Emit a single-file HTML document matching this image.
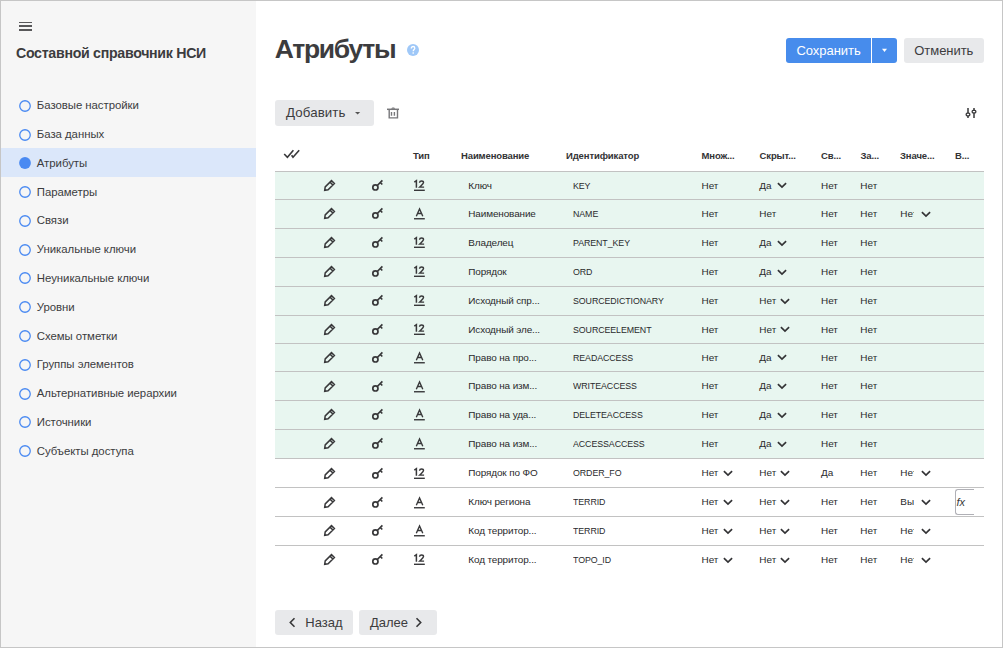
<!DOCTYPE html>
<html><head><meta charset="utf-8"><style>
*{box-sizing:border-box;margin:0;padding:0}
html,body{width:1003px;height:648px;overflow:hidden;background:#fff;font-family:"Liberation Sans", sans-serif;color:#3d3d3f}
.t{position:absolute;white-space:nowrap}
.frame{position:absolute;left:0;top:0;width:1003px;height:648px;border:1px solid #c6c6c6;z-index:50;pointer-events:none}
.side{position:absolute;left:0;top:0;width:256px;height:648px;background:#f6f6f6}
.burger{position:absolute;left:19px;width:13px;height:1.9px;background:#58585a}
.msel{position:absolute;left:1px;width:255px;background:#dbe7fa}
.mdot{position:absolute;left:18.6px;width:11.8px;height:11.8px;border-radius:50%;border:1.6px solid #4a8af2}
.mdot.sel{background:#4b8cf0}
.help{position:absolute;left:407px;top:43.8px;width:12px;height:12px;border-radius:50%;background:#9fc8f8;color:#fff;font-size:9px;font-weight:bold;text-align:center;line-height:12px}
.btn{position:absolute;border-radius:3px}
.blue{background:#478cec}
.gray{background:#e8e9eb}
.row{position:absolute;left:275px;width:709px}
.hl{position:absolute;left:275px;width:709px;height:1px;background:#c2c2c2}
.ic{position:absolute}
.td{color:#2a2a2c}
.ul{position:absolute;height:1.5px;background:#38383a}
.clip{position:absolute;overflow:hidden}
.fx{position:absolute;left:954.5px;width:19.5px;border:1px solid #b0b0b6;border-right:none;border-radius:3px 0 0 3px;background:#fff}
</style></head><body>
<div class="side"></div>
<div class="burger" style="top:21.55px"></div>
<div class="burger" style="top:25.45px"></div>
<div class="burger" style="top:29.45px"></div>
<div class="t " style="left:16.00px;top:43.90px;font-size:14.2px;line-height:18px;font-weight:700;color:#3c3c3e;letter-spacing:-0.3px">Составной справочник НСИ</div>
<svg class="ic" style="left:18.5px;top:99.80px" width="12" height="12" viewBox="0 0 12 12"><circle cx="6" cy="6" r="5.25" fill="none" stroke="#4a8af2" stroke-width="1.3"/></svg>
<div class="t " style="left:36.80px;top:98.37px;font-size:11.4px;line-height:15px;color:#3c3c3e;letter-spacing:-0.04px">Базовые настройки</div>
<svg class="ic" style="left:18.5px;top:128.58px" width="12" height="12" viewBox="0 0 12 12"><circle cx="6" cy="6" r="5.25" fill="none" stroke="#4a8af2" stroke-width="1.3"/></svg>
<div class="t " style="left:36.80px;top:127.15px;font-size:11.4px;line-height:15px;color:#3c3c3e;letter-spacing:-0.04px">База данных</div>
<div class="msel" style="top:148px;height:29px"></div>
<svg class="ic" style="left:18.5px;top:157.36px" width="12" height="12" viewBox="0 0 12 12"><circle cx="6" cy="6" r="5.9" fill="#4a8af2"/></svg>
<div class="t " style="left:36.80px;top:155.93px;font-size:11.4px;line-height:15px;color:#3c3c3e;letter-spacing:-0.04px">Атрибуты</div>
<svg class="ic" style="left:18.5px;top:186.14px" width="12" height="12" viewBox="0 0 12 12"><circle cx="6" cy="6" r="5.25" fill="none" stroke="#4a8af2" stroke-width="1.3"/></svg>
<div class="t " style="left:36.80px;top:184.71px;font-size:11.4px;line-height:15px;color:#3c3c3e;letter-spacing:-0.04px">Параметры</div>
<svg class="ic" style="left:18.5px;top:214.92px" width="12" height="12" viewBox="0 0 12 12"><circle cx="6" cy="6" r="5.25" fill="none" stroke="#4a8af2" stroke-width="1.3"/></svg>
<div class="t " style="left:36.80px;top:213.49px;font-size:11.4px;line-height:15px;color:#3c3c3e;letter-spacing:-0.04px">Связи</div>
<svg class="ic" style="left:18.5px;top:243.70px" width="12" height="12" viewBox="0 0 12 12"><circle cx="6" cy="6" r="5.25" fill="none" stroke="#4a8af2" stroke-width="1.3"/></svg>
<div class="t " style="left:36.80px;top:242.27px;font-size:11.4px;line-height:15px;color:#3c3c3e;letter-spacing:-0.04px">Уникальные ключи</div>
<svg class="ic" style="left:18.5px;top:272.48px" width="12" height="12" viewBox="0 0 12 12"><circle cx="6" cy="6" r="5.25" fill="none" stroke="#4a8af2" stroke-width="1.3"/></svg>
<div class="t " style="left:36.80px;top:271.05px;font-size:11.4px;line-height:15px;color:#3c3c3e;letter-spacing:-0.04px">Неуникальные ключи</div>
<svg class="ic" style="left:18.5px;top:301.26px" width="12" height="12" viewBox="0 0 12 12"><circle cx="6" cy="6" r="5.25" fill="none" stroke="#4a8af2" stroke-width="1.3"/></svg>
<div class="t " style="left:36.80px;top:299.83px;font-size:11.4px;line-height:15px;color:#3c3c3e;letter-spacing:-0.04px">Уровни</div>
<svg class="ic" style="left:18.5px;top:330.04px" width="12" height="12" viewBox="0 0 12 12"><circle cx="6" cy="6" r="5.25" fill="none" stroke="#4a8af2" stroke-width="1.3"/></svg>
<div class="t " style="left:36.80px;top:328.61px;font-size:11.4px;line-height:15px;color:#3c3c3e;letter-spacing:-0.04px">Схемы отметки</div>
<svg class="ic" style="left:18.5px;top:358.82px" width="12" height="12" viewBox="0 0 12 12"><circle cx="6" cy="6" r="5.25" fill="none" stroke="#4a8af2" stroke-width="1.3"/></svg>
<div class="t " style="left:36.80px;top:357.39px;font-size:11.4px;line-height:15px;color:#3c3c3e;letter-spacing:-0.04px">Группы элементов</div>
<svg class="ic" style="left:18.5px;top:387.60px" width="12" height="12" viewBox="0 0 12 12"><circle cx="6" cy="6" r="5.25" fill="none" stroke="#4a8af2" stroke-width="1.3"/></svg>
<div class="t " style="left:36.80px;top:386.17px;font-size:11.4px;line-height:15px;color:#3c3c3e;letter-spacing:-0.04px">Альтернативные иерархии</div>
<svg class="ic" style="left:18.5px;top:416.38px" width="12" height="12" viewBox="0 0 12 12"><circle cx="6" cy="6" r="5.25" fill="none" stroke="#4a8af2" stroke-width="1.3"/></svg>
<div class="t " style="left:36.80px;top:414.95px;font-size:11.4px;line-height:15px;color:#3c3c3e;letter-spacing:-0.04px">Источники</div>
<svg class="ic" style="left:18.5px;top:445.16px" width="12" height="12" viewBox="0 0 12 12"><circle cx="6" cy="6" r="5.25" fill="none" stroke="#4a8af2" stroke-width="1.3"/></svg>
<div class="t " style="left:36.80px;top:443.73px;font-size:11.4px;line-height:15px;color:#3c3c3e;letter-spacing:-0.04px">Субъекты доступа</div>
<div class="t " style="left:274.80px;top:32.46px;font-size:26.5px;line-height:34px;font-weight:700;color:#3c3c3e;letter-spacing:-1.3px">Атрибуты</div>
<svg class="ic" style="left:407px;top:43.9px" width="12" height="12" viewBox="0 0 12 12"><circle cx="6" cy="6" r="6" fill="#9fc8f8"/><path d="M4.3 4.5 C4.3 3.2 5.1 2.5 6.1 2.5 C7.1 2.5 7.8 3.2 7.8 4.2 C7.8 5.4 6.3 5.7 6.2 7.3" fill="none" stroke="#fff" stroke-width="1.3"/><rect x="5.5" y="8.3" width="1.4" height="1.4" fill="#fff"/></svg>
<div class="btn blue" style="left:786px;top:38px;width:111px;height:25px"></div>
<div class="t " style="left:796.50px;top:42.22px;font-size:13px;line-height:17px;color:#fff;letter-spacing:-0.05px">Сохранить</div>
<div style="position:absolute;left:871px;top:38px;width:1px;height:25px;background:#fff"></div>
<svg class="ic" style="left:881.3px;top:48.3px" width="8" height="6" viewBox="0 0 8 6"><path d="M1 0.7 L6 0.7 L3.5 4 Z" fill="#fff"/></svg>
<div class="btn gray" style="left:904px;top:38px;width:80px;height:25px"></div>
<div class="t " style="left:914.30px;top:42.22px;font-size:13px;line-height:17px;color:#3c3c3e;letter-spacing:-0.05px">Отменить</div>
<div class="btn gray" style="left:275px;top:100px;width:99px;height:26px"></div>
<div class="t " style="left:286.00px;top:103.71px;font-size:13.3px;line-height:17px;color:#3c3c3e;letter-spacing:0.1px">Добавить</div>
<svg class="ic" style="left:354px;top:110.8px" width="8" height="5" viewBox="0 0 8 5"><path d="M1 1 L6.2 1 L3.6 3.6 Z" fill="#555"/></svg>
<svg class="ic" style="left:381px;top:100px" width="25" height="25" viewBox="0 0 25 25"><path d="M6 9.3 H18" stroke="#77777a" stroke-width="1.5" fill="none"/><path d="M10.2 8.8 C10.6 7 13.8 7 14.2 8.8 Z" fill="#77777a"/><path d="M8.2 9.6 V17.9 H16.5 V9.6 M10.5 12.1 V15.7 M13.4 12.1 V15.7" fill="none" stroke="#77777a" stroke-width="1.4"/></svg>
<svg class="ic" style="left:963px;top:106px" width="14" height="14" viewBox="0 0 14 14"><path d="M5 2 V12 M11 2 V12" fill="none" stroke="#38383a" stroke-width="1.5"/><rect x="3.2" y="7.2" width="3.6" height="2.6" rx="1" fill="#fff" stroke="#38383a" stroke-width="1.3"/><rect x="9.2" y="4.3" width="3.6" height="2.6" rx="1" fill="#fff" stroke="#38383a" stroke-width="1.3"/></svg>
<div class="t " style="left:413.00px;top:149.62px;font-size:9.5px;line-height:12px;font-weight:700;color:#333335;letter-spacing:-0.12px">Тип</div>
<div class="t " style="left:461.00px;top:149.62px;font-size:9.5px;line-height:12px;font-weight:700;color:#333335;letter-spacing:-0.12px">Наименование</div>
<div class="t " style="left:566.00px;top:149.62px;font-size:9.5px;line-height:12px;font-weight:700;color:#333335;letter-spacing:-0.12px">Идентификатор</div>
<div class="t " style="left:701.50px;top:149.62px;font-size:9.5px;line-height:12px;font-weight:700;color:#333335;letter-spacing:-0.12px">Множ...</div>
<div class="t " style="left:759.50px;top:149.62px;font-size:9.5px;line-height:12px;font-weight:700;color:#333335;letter-spacing:-0.12px">Скрыт...</div>
<div class="t " style="left:821.00px;top:149.62px;font-size:9.5px;line-height:12px;font-weight:700;color:#333335;letter-spacing:-0.12px">Св...</div>
<div class="t " style="left:860.50px;top:149.62px;font-size:9.5px;line-height:12px;font-weight:700;color:#333335;letter-spacing:-0.12px">За...</div>
<div class="t " style="left:900.00px;top:149.62px;font-size:9.5px;line-height:12px;font-weight:700;color:#333335;letter-spacing:-0.12px">Значе...</div>
<div class="t " style="left:955.00px;top:149.62px;font-size:9.5px;line-height:12px;font-weight:700;color:#333335;letter-spacing:-0.12px">В...</div>
<svg class="ic" style="left:282px;top:147px" width="20" height="13" viewBox="0 0 20 13"><path d="M2.2 7 L5.4 10.3 L11.4 3.3 M9.6 8.3 L11 10.3 L17.2 3.3" fill="none" stroke="#38383a" stroke-width="1.6"/></svg>
<div class="hl" style="top:171px"></div>
<div class="row" style="top:172px;height:27px;background:#e8f6f0"></div>
<div class="hl" style="top:199px"></div>
<div class="ic" style="left:318px;top:175.00px"><svg width="20" height="20" viewBox="0 0 20 20"><path d="M6.7 15.3 L7.2 11.9 L13.5 5.6 L16.4 8.5 L10.1 14.8 Z M12 7.1 L14.9 10" fill="none" stroke="#38383a" stroke-width="1.5" stroke-linejoin="miter"/></svg></div>
<div class="ic" style="left:365px;top:175.00px"><svg width="20" height="20" viewBox="0 0 20 20"><circle cx="10.4" cy="12.4" r="2.6" fill="none" stroke="#38383a" stroke-width="1.7"/><path d="M12.3 10.5 L17.4 5.4 M15.3 7.5 L17.3 9.5" fill="none" stroke="#38383a" stroke-width="1.7"/></svg></div>
<svg class="ic" style="left:408px;top:176.00px" width="20" height="18" viewBox="0 0 20 18"><path d="M6.3 6.1 L8.4 4.6 V11.8" fill="none" stroke="#38383a" stroke-width="1.5"/><path d="M11.5 6.7 C11.6 5.3 12.5 4.9 13.6 4.9 C14.8 4.9 15.5 5.6 15.5 6.6 C15.5 7.6 14.9 8.2 11.8 11.1 H16.1" fill="none" stroke="#38383a" stroke-width="1.45"/><rect x="6" y="13.6" width="10.8" height="1.4" fill="#38383a"/></svg>
<div class="t td" style="left:468.30px;top:178.82px;font-size:9.95px;line-height:13px;letter-spacing:-0.12px">Ключ</div>
<div class="t td" style="left:573.30px;top:178.82px;font-size:9.95px;line-height:13px;letter-spacing:-0.1px;transform:scaleX(0.89);transform-origin:0 0">KEY</div>
<div class="t td" style="left:701.50px;top:178.82px;font-size:9.95px;line-height:13px">Нет</div>
<div class="t td" style="left:759.30px;top:178.82px;font-size:9.95px;line-height:13px">Да</div>
<svg class="ic" style="left:776.70px;top:182.45px" width="10" height="7" viewBox="0 0 10 7"><path d="M0.9 1.1 L5 5.1 L9.1 1.1" fill="none" stroke="#333335" stroke-width="1.65"/></svg>
<div class="t td" style="left:821.00px;top:178.82px;font-size:9.95px;line-height:13px">Нет</div>
<div class="t td" style="left:860.30px;top:178.82px;font-size:9.95px;line-height:13px">Нет</div>
<div class="row" style="top:200px;height:28px;background:#e8f6f0"></div>
<div class="hl" style="top:228px"></div>
<div class="ic" style="left:318px;top:203.45px"><svg width="20" height="20" viewBox="0 0 20 20"><path d="M6.7 15.3 L7.2 11.9 L13.5 5.6 L16.4 8.5 L10.1 14.8 Z M12 7.1 L14.9 10" fill="none" stroke="#38383a" stroke-width="1.5" stroke-linejoin="miter"/></svg></div>
<div class="ic" style="left:365px;top:203.45px"><svg width="20" height="20" viewBox="0 0 20 20"><circle cx="10.4" cy="12.4" r="2.6" fill="none" stroke="#38383a" stroke-width="1.7"/><path d="M12.3 10.5 L17.4 5.4 M15.3 7.5 L17.3 9.5" fill="none" stroke="#38383a" stroke-width="1.7"/></svg></div>
<svg class="ic" style="left:408px;top:204.45px" width="20" height="18" viewBox="0 0 20 18"><path d="M8.3 12.3 L11.55 5 L14.8 12.3 M9.4 9.5 H13.7" fill="none" stroke="#38383a" stroke-width="1.4"/><rect x="6" y="14.05" width="10.8" height="1.4" fill="#38383a"/></svg>
<div class="t td" style="left:468.30px;top:207.27px;font-size:9.95px;line-height:13px;letter-spacing:-0.12px">Наименование</div>
<div class="t td" style="left:573.30px;top:207.27px;font-size:9.95px;line-height:13px;letter-spacing:-0.1px;transform:scaleX(0.89);transform-origin:0 0">NAME</div>
<div class="t td" style="left:701.50px;top:207.27px;font-size:9.95px;line-height:13px">Нет</div>
<div class="t td" style="left:759.30px;top:207.27px;font-size:9.95px;line-height:13px">Нет</div>
<div class="t td" style="left:821.00px;top:207.27px;font-size:9.95px;line-height:13px">Нет</div>
<div class="t td" style="left:860.30px;top:207.27px;font-size:9.95px;line-height:13px">Нет</div>
<div class="clip" style="left:900px;top:199.50px;height:28.80px;width:14.2px"><div class="t td" style="left:0.30px;top:7.77px;font-size:9.95px;line-height:13px">Нет</div></div>
<svg class="ic" style="left:920.60px;top:210.90px" width="10" height="7" viewBox="0 0 10 7"><path d="M0.9 1.1 L5 5.1 L9.1 1.1" fill="none" stroke="#333335" stroke-width="1.65"/></svg>
<div class="row" style="top:229px;height:28px;background:#e8f6f0"></div>
<div class="hl" style="top:257px"></div>
<div class="ic" style="left:318px;top:232.35px"><svg width="20" height="20" viewBox="0 0 20 20"><path d="M6.7 15.3 L7.2 11.9 L13.5 5.6 L16.4 8.5 L10.1 14.8 Z M12 7.1 L14.9 10" fill="none" stroke="#38383a" stroke-width="1.5" stroke-linejoin="miter"/></svg></div>
<div class="ic" style="left:365px;top:232.35px"><svg width="20" height="20" viewBox="0 0 20 20"><circle cx="10.4" cy="12.4" r="2.6" fill="none" stroke="#38383a" stroke-width="1.7"/><path d="M12.3 10.5 L17.4 5.4 M15.3 7.5 L17.3 9.5" fill="none" stroke="#38383a" stroke-width="1.7"/></svg></div>
<svg class="ic" style="left:408px;top:233.35px" width="20" height="18" viewBox="0 0 20 18"><path d="M6.3 6.1 L8.4 4.6 V11.8" fill="none" stroke="#38383a" stroke-width="1.5"/><path d="M11.5 6.7 C11.6 5.3 12.5 4.9 13.6 4.9 C14.8 4.9 15.5 5.6 15.5 6.6 C15.5 7.6 14.9 8.2 11.8 11.1 H16.1" fill="none" stroke="#38383a" stroke-width="1.45"/><rect x="6" y="13.6" width="10.8" height="1.4" fill="#38383a"/></svg>
<div class="t td" style="left:468.30px;top:236.17px;font-size:9.95px;line-height:13px;letter-spacing:-0.12px">Владелец</div>
<div class="t td" style="left:573.30px;top:236.17px;font-size:9.95px;line-height:13px;letter-spacing:-0.1px;transform:scaleX(0.89);transform-origin:0 0">PARENT_KEY</div>
<div class="t td" style="left:701.50px;top:236.17px;font-size:9.95px;line-height:13px">Нет</div>
<div class="t td" style="left:759.30px;top:236.17px;font-size:9.95px;line-height:13px">Да</div>
<svg class="ic" style="left:776.70px;top:239.80px" width="10" height="7" viewBox="0 0 10 7"><path d="M0.9 1.1 L5 5.1 L9.1 1.1" fill="none" stroke="#333335" stroke-width="1.65"/></svg>
<div class="t td" style="left:821.00px;top:236.17px;font-size:9.95px;line-height:13px">Нет</div>
<div class="t td" style="left:860.30px;top:236.17px;font-size:9.95px;line-height:13px">Нет</div>
<div class="row" style="top:258px;height:28px;background:#e8f6f0"></div>
<div class="hl" style="top:286px"></div>
<div class="ic" style="left:318px;top:261.40px"><svg width="20" height="20" viewBox="0 0 20 20"><path d="M6.7 15.3 L7.2 11.9 L13.5 5.6 L16.4 8.5 L10.1 14.8 Z M12 7.1 L14.9 10" fill="none" stroke="#38383a" stroke-width="1.5" stroke-linejoin="miter"/></svg></div>
<div class="ic" style="left:365px;top:261.40px"><svg width="20" height="20" viewBox="0 0 20 20"><circle cx="10.4" cy="12.4" r="2.6" fill="none" stroke="#38383a" stroke-width="1.7"/><path d="M12.3 10.5 L17.4 5.4 M15.3 7.5 L17.3 9.5" fill="none" stroke="#38383a" stroke-width="1.7"/></svg></div>
<svg class="ic" style="left:408px;top:262.40px" width="20" height="18" viewBox="0 0 20 18"><path d="M6.3 6.1 L8.4 4.6 V11.8" fill="none" stroke="#38383a" stroke-width="1.5"/><path d="M11.5 6.7 C11.6 5.3 12.5 4.9 13.6 4.9 C14.8 4.9 15.5 5.6 15.5 6.6 C15.5 7.6 14.9 8.2 11.8 11.1 H16.1" fill="none" stroke="#38383a" stroke-width="1.45"/><rect x="6" y="13.6" width="10.8" height="1.4" fill="#38383a"/></svg>
<div class="t td" style="left:468.30px;top:265.22px;font-size:9.95px;line-height:13px;letter-spacing:-0.12px">Порядок</div>
<div class="t td" style="left:573.30px;top:265.22px;font-size:9.95px;line-height:13px;letter-spacing:-0.1px;transform:scaleX(0.89);transform-origin:0 0">ORD</div>
<div class="t td" style="left:701.50px;top:265.22px;font-size:9.95px;line-height:13px">Нет</div>
<div class="t td" style="left:759.30px;top:265.22px;font-size:9.95px;line-height:13px">Да</div>
<svg class="ic" style="left:776.70px;top:268.85px" width="10" height="7" viewBox="0 0 10 7"><path d="M0.9 1.1 L5 5.1 L9.1 1.1" fill="none" stroke="#333335" stroke-width="1.65"/></svg>
<div class="t td" style="left:821.00px;top:265.22px;font-size:9.95px;line-height:13px">Нет</div>
<div class="t td" style="left:860.30px;top:265.22px;font-size:9.95px;line-height:13px">Нет</div>
<div class="row" style="top:287px;height:28px;background:#e8f6f0"></div>
<div class="hl" style="top:315px"></div>
<div class="ic" style="left:318px;top:290.40px"><svg width="20" height="20" viewBox="0 0 20 20"><path d="M6.7 15.3 L7.2 11.9 L13.5 5.6 L16.4 8.5 L10.1 14.8 Z M12 7.1 L14.9 10" fill="none" stroke="#38383a" stroke-width="1.5" stroke-linejoin="miter"/></svg></div>
<div class="ic" style="left:365px;top:290.40px"><svg width="20" height="20" viewBox="0 0 20 20"><circle cx="10.4" cy="12.4" r="2.6" fill="none" stroke="#38383a" stroke-width="1.7"/><path d="M12.3 10.5 L17.4 5.4 M15.3 7.5 L17.3 9.5" fill="none" stroke="#38383a" stroke-width="1.7"/></svg></div>
<svg class="ic" style="left:408px;top:291.40px" width="20" height="18" viewBox="0 0 20 18"><path d="M6.3 6.1 L8.4 4.6 V11.8" fill="none" stroke="#38383a" stroke-width="1.5"/><path d="M11.5 6.7 C11.6 5.3 12.5 4.9 13.6 4.9 C14.8 4.9 15.5 5.6 15.5 6.6 C15.5 7.6 14.9 8.2 11.8 11.1 H16.1" fill="none" stroke="#38383a" stroke-width="1.45"/><rect x="6" y="13.6" width="10.8" height="1.4" fill="#38383a"/></svg>
<div class="t td" style="left:468.30px;top:294.22px;font-size:9.95px;line-height:13px;letter-spacing:-0.12px">Исходный спр...</div>
<div class="t td" style="left:573.30px;top:294.22px;font-size:9.95px;line-height:13px;letter-spacing:-0.1px;transform:scaleX(0.89);transform-origin:0 0">SOURCEDICTIONARY</div>
<div class="t td" style="left:701.50px;top:294.22px;font-size:9.95px;line-height:13px">Нет</div>
<div class="t td" style="left:759.30px;top:294.22px;font-size:9.95px;line-height:13px">Нет</div>
<svg class="ic" style="left:780.20px;top:297.85px" width="10" height="7" viewBox="0 0 10 7"><path d="M0.9 1.1 L5 5.1 L9.1 1.1" fill="none" stroke="#333335" stroke-width="1.65"/></svg>
<div class="t td" style="left:821.00px;top:294.22px;font-size:9.95px;line-height:13px">Нет</div>
<div class="t td" style="left:860.30px;top:294.22px;font-size:9.95px;line-height:13px">Нет</div>
<div class="row" style="top:316px;height:27px;background:#e8f6f0"></div>
<div class="hl" style="top:343px"></div>
<div class="ic" style="left:318px;top:318.90px"><svg width="20" height="20" viewBox="0 0 20 20"><path d="M6.7 15.3 L7.2 11.9 L13.5 5.6 L16.4 8.5 L10.1 14.8 Z M12 7.1 L14.9 10" fill="none" stroke="#38383a" stroke-width="1.5" stroke-linejoin="miter"/></svg></div>
<div class="ic" style="left:365px;top:318.90px"><svg width="20" height="20" viewBox="0 0 20 20"><circle cx="10.4" cy="12.4" r="2.6" fill="none" stroke="#38383a" stroke-width="1.7"/><path d="M12.3 10.5 L17.4 5.4 M15.3 7.5 L17.3 9.5" fill="none" stroke="#38383a" stroke-width="1.7"/></svg></div>
<svg class="ic" style="left:408px;top:319.90px" width="20" height="18" viewBox="0 0 20 18"><path d="M6.3 6.1 L8.4 4.6 V11.8" fill="none" stroke="#38383a" stroke-width="1.5"/><path d="M11.5 6.7 C11.6 5.3 12.5 4.9 13.6 4.9 C14.8 4.9 15.5 5.6 15.5 6.6 C15.5 7.6 14.9 8.2 11.8 11.1 H16.1" fill="none" stroke="#38383a" stroke-width="1.45"/><rect x="6" y="13.6" width="10.8" height="1.4" fill="#38383a"/></svg>
<div class="t td" style="left:468.30px;top:322.72px;font-size:9.95px;line-height:13px;letter-spacing:-0.12px">Исходный эле...</div>
<div class="t td" style="left:573.30px;top:322.72px;font-size:9.95px;line-height:13px;letter-spacing:-0.1px;transform:scaleX(0.89);transform-origin:0 0">SOURCEELEMENT</div>
<div class="t td" style="left:701.50px;top:322.72px;font-size:9.95px;line-height:13px">Нет</div>
<div class="t td" style="left:759.30px;top:322.72px;font-size:9.95px;line-height:13px">Нет</div>
<svg class="ic" style="left:780.20px;top:326.35px" width="10" height="7" viewBox="0 0 10 7"><path d="M0.9 1.1 L5 5.1 L9.1 1.1" fill="none" stroke="#333335" stroke-width="1.65"/></svg>
<div class="t td" style="left:821.00px;top:322.72px;font-size:9.95px;line-height:13px">Нет</div>
<div class="t td" style="left:860.30px;top:322.72px;font-size:9.95px;line-height:13px">Нет</div>
<div class="row" style="top:344px;height:27px;background:#e8f6f0"></div>
<div class="hl" style="top:371px"></div>
<div class="ic" style="left:318px;top:347.00px"><svg width="20" height="20" viewBox="0 0 20 20"><path d="M6.7 15.3 L7.2 11.9 L13.5 5.6 L16.4 8.5 L10.1 14.8 Z M12 7.1 L14.9 10" fill="none" stroke="#38383a" stroke-width="1.5" stroke-linejoin="miter"/></svg></div>
<div class="ic" style="left:365px;top:347.00px"><svg width="20" height="20" viewBox="0 0 20 20"><circle cx="10.4" cy="12.4" r="2.6" fill="none" stroke="#38383a" stroke-width="1.7"/><path d="M12.3 10.5 L17.4 5.4 M15.3 7.5 L17.3 9.5" fill="none" stroke="#38383a" stroke-width="1.7"/></svg></div>
<svg class="ic" style="left:408px;top:348.00px" width="20" height="18" viewBox="0 0 20 18"><path d="M8.3 12.3 L11.55 5 L14.8 12.3 M9.4 9.5 H13.7" fill="none" stroke="#38383a" stroke-width="1.4"/><rect x="6" y="14.05" width="10.8" height="1.4" fill="#38383a"/></svg>
<div class="t td" style="left:468.30px;top:350.82px;font-size:9.95px;line-height:13px;letter-spacing:-0.12px">Право на про...</div>
<div class="t td" style="left:573.30px;top:350.82px;font-size:9.95px;line-height:13px;letter-spacing:-0.1px;transform:scaleX(0.89);transform-origin:0 0">READACCESS</div>
<div class="t td" style="left:701.50px;top:350.82px;font-size:9.95px;line-height:13px">Нет</div>
<div class="t td" style="left:759.30px;top:350.82px;font-size:9.95px;line-height:13px">Да</div>
<svg class="ic" style="left:776.70px;top:354.45px" width="10" height="7" viewBox="0 0 10 7"><path d="M0.9 1.1 L5 5.1 L9.1 1.1" fill="none" stroke="#333335" stroke-width="1.65"/></svg>
<div class="t td" style="left:821.00px;top:350.82px;font-size:9.95px;line-height:13px">Нет</div>
<div class="t td" style="left:860.30px;top:350.82px;font-size:9.95px;line-height:13px">Нет</div>
<div class="row" style="top:372px;height:28px;background:#e8f6f0"></div>
<div class="hl" style="top:400px"></div>
<div class="ic" style="left:318px;top:375.50px"><svg width="20" height="20" viewBox="0 0 20 20"><path d="M6.7 15.3 L7.2 11.9 L13.5 5.6 L16.4 8.5 L10.1 14.8 Z M12 7.1 L14.9 10" fill="none" stroke="#38383a" stroke-width="1.5" stroke-linejoin="miter"/></svg></div>
<div class="ic" style="left:365px;top:375.50px"><svg width="20" height="20" viewBox="0 0 20 20"><circle cx="10.4" cy="12.4" r="2.6" fill="none" stroke="#38383a" stroke-width="1.7"/><path d="M12.3 10.5 L17.4 5.4 M15.3 7.5 L17.3 9.5" fill="none" stroke="#38383a" stroke-width="1.7"/></svg></div>
<svg class="ic" style="left:408px;top:376.50px" width="20" height="18" viewBox="0 0 20 18"><path d="M8.3 12.3 L11.55 5 L14.8 12.3 M9.4 9.5 H13.7" fill="none" stroke="#38383a" stroke-width="1.4"/><rect x="6" y="14.05" width="10.8" height="1.4" fill="#38383a"/></svg>
<div class="t td" style="left:468.30px;top:379.32px;font-size:9.95px;line-height:13px;letter-spacing:-0.12px">Право на изм...</div>
<div class="t td" style="left:573.30px;top:379.32px;font-size:9.95px;line-height:13px;letter-spacing:-0.1px;transform:scaleX(0.89);transform-origin:0 0">WRITEACCESS</div>
<div class="t td" style="left:701.50px;top:379.32px;font-size:9.95px;line-height:13px">Нет</div>
<div class="t td" style="left:759.30px;top:379.32px;font-size:9.95px;line-height:13px">Да</div>
<svg class="ic" style="left:776.70px;top:382.95px" width="10" height="7" viewBox="0 0 10 7"><path d="M0.9 1.1 L5 5.1 L9.1 1.1" fill="none" stroke="#333335" stroke-width="1.65"/></svg>
<div class="t td" style="left:821.00px;top:379.32px;font-size:9.95px;line-height:13px">Нет</div>
<div class="t td" style="left:860.30px;top:379.32px;font-size:9.95px;line-height:13px">Нет</div>
<div class="row" style="top:401px;height:28px;background:#e8f6f0"></div>
<div class="hl" style="top:429px"></div>
<div class="ic" style="left:318px;top:404.40px"><svg width="20" height="20" viewBox="0 0 20 20"><path d="M6.7 15.3 L7.2 11.9 L13.5 5.6 L16.4 8.5 L10.1 14.8 Z M12 7.1 L14.9 10" fill="none" stroke="#38383a" stroke-width="1.5" stroke-linejoin="miter"/></svg></div>
<div class="ic" style="left:365px;top:404.40px"><svg width="20" height="20" viewBox="0 0 20 20"><circle cx="10.4" cy="12.4" r="2.6" fill="none" stroke="#38383a" stroke-width="1.7"/><path d="M12.3 10.5 L17.4 5.4 M15.3 7.5 L17.3 9.5" fill="none" stroke="#38383a" stroke-width="1.7"/></svg></div>
<svg class="ic" style="left:408px;top:405.40px" width="20" height="18" viewBox="0 0 20 18"><path d="M8.3 12.3 L11.55 5 L14.8 12.3 M9.4 9.5 H13.7" fill="none" stroke="#38383a" stroke-width="1.4"/><rect x="6" y="14.05" width="10.8" height="1.4" fill="#38383a"/></svg>
<div class="t td" style="left:468.30px;top:408.22px;font-size:9.95px;line-height:13px;letter-spacing:-0.12px">Право на уда...</div>
<div class="t td" style="left:573.30px;top:408.22px;font-size:9.95px;line-height:13px;letter-spacing:-0.1px;transform:scaleX(0.89);transform-origin:0 0">DELETEACCESS</div>
<div class="t td" style="left:701.50px;top:408.22px;font-size:9.95px;line-height:13px">Нет</div>
<div class="t td" style="left:759.30px;top:408.22px;font-size:9.95px;line-height:13px">Да</div>
<svg class="ic" style="left:776.70px;top:411.85px" width="10" height="7" viewBox="0 0 10 7"><path d="M0.9 1.1 L5 5.1 L9.1 1.1" fill="none" stroke="#333335" stroke-width="1.65"/></svg>
<div class="t td" style="left:821.00px;top:408.22px;font-size:9.95px;line-height:13px">Нет</div>
<div class="t td" style="left:860.30px;top:408.22px;font-size:9.95px;line-height:13px">Нет</div>
<div class="row" style="top:430px;height:28px;background:#e8f6f0"></div>
<div class="hl" style="top:458px"></div>
<div class="ic" style="left:318px;top:433.40px"><svg width="20" height="20" viewBox="0 0 20 20"><path d="M6.7 15.3 L7.2 11.9 L13.5 5.6 L16.4 8.5 L10.1 14.8 Z M12 7.1 L14.9 10" fill="none" stroke="#38383a" stroke-width="1.5" stroke-linejoin="miter"/></svg></div>
<div class="ic" style="left:365px;top:433.40px"><svg width="20" height="20" viewBox="0 0 20 20"><circle cx="10.4" cy="12.4" r="2.6" fill="none" stroke="#38383a" stroke-width="1.7"/><path d="M12.3 10.5 L17.4 5.4 M15.3 7.5 L17.3 9.5" fill="none" stroke="#38383a" stroke-width="1.7"/></svg></div>
<svg class="ic" style="left:408px;top:434.40px" width="20" height="18" viewBox="0 0 20 18"><path d="M8.3 12.3 L11.55 5 L14.8 12.3 M9.4 9.5 H13.7" fill="none" stroke="#38383a" stroke-width="1.4"/><rect x="6" y="14.05" width="10.8" height="1.4" fill="#38383a"/></svg>
<div class="t td" style="left:468.30px;top:437.22px;font-size:9.95px;line-height:13px;letter-spacing:-0.12px">Право на изм...</div>
<div class="t td" style="left:573.30px;top:437.22px;font-size:9.95px;line-height:13px;letter-spacing:-0.1px;transform:scaleX(0.89);transform-origin:0 0">ACCESSACCESS</div>
<div class="t td" style="left:701.50px;top:437.22px;font-size:9.95px;line-height:13px">Нет</div>
<div class="t td" style="left:759.30px;top:437.22px;font-size:9.95px;line-height:13px">Да</div>
<svg class="ic" style="left:776.70px;top:440.85px" width="10" height="7" viewBox="0 0 10 7"><path d="M0.9 1.1 L5 5.1 L9.1 1.1" fill="none" stroke="#333335" stroke-width="1.65"/></svg>
<div class="t td" style="left:821.00px;top:437.22px;font-size:9.95px;line-height:13px">Нет</div>
<div class="t td" style="left:860.30px;top:437.22px;font-size:9.95px;line-height:13px">Нет</div>
<div class="hl" style="top:487px"></div>
<div class="ic" style="left:318px;top:462.50px"><svg width="20" height="20" viewBox="0 0 20 20"><path d="M6.7 15.3 L7.2 11.9 L13.5 5.6 L16.4 8.5 L10.1 14.8 Z M12 7.1 L14.9 10" fill="none" stroke="#38383a" stroke-width="1.5" stroke-linejoin="miter"/></svg></div>
<div class="ic" style="left:365px;top:462.50px"><svg width="20" height="20" viewBox="0 0 20 20"><circle cx="10.4" cy="12.4" r="2.6" fill="none" stroke="#38383a" stroke-width="1.7"/><path d="M12.3 10.5 L17.4 5.4 M15.3 7.5 L17.3 9.5" fill="none" stroke="#38383a" stroke-width="1.7"/></svg></div>
<svg class="ic" style="left:408px;top:463.50px" width="20" height="18" viewBox="0 0 20 18"><path d="M6.3 6.1 L8.4 4.6 V11.8" fill="none" stroke="#38383a" stroke-width="1.5"/><path d="M11.5 6.7 C11.6 5.3 12.5 4.9 13.6 4.9 C14.8 4.9 15.5 5.6 15.5 6.6 C15.5 7.6 14.9 8.2 11.8 11.1 H16.1" fill="none" stroke="#38383a" stroke-width="1.45"/><rect x="6" y="13.6" width="10.8" height="1.4" fill="#38383a"/></svg>
<div class="t td" style="left:468.30px;top:466.32px;font-size:9.95px;line-height:13px;letter-spacing:-0.12px">Порядок по ФО</div>
<div class="t td" style="left:573.30px;top:466.32px;font-size:9.95px;line-height:13px;letter-spacing:-0.1px;transform:scaleX(0.89);transform-origin:0 0">ORDER_FO</div>
<div class="t td" style="left:701.50px;top:466.32px;font-size:9.95px;line-height:13px">Нет</div>
<svg class="ic" style="left:722.70px;top:469.95px" width="10" height="7" viewBox="0 0 10 7"><path d="M0.9 1.1 L5 5.1 L9.1 1.1" fill="none" stroke="#333335" stroke-width="1.65"/></svg>
<div class="t td" style="left:759.30px;top:466.32px;font-size:9.95px;line-height:13px">Нет</div>
<svg class="ic" style="left:780.20px;top:469.95px" width="10" height="7" viewBox="0 0 10 7"><path d="M0.9 1.1 L5 5.1 L9.1 1.1" fill="none" stroke="#333335" stroke-width="1.65"/></svg>
<div class="t td" style="left:821.00px;top:466.32px;font-size:9.95px;line-height:13px">Да</div>
<div class="t td" style="left:860.30px;top:466.32px;font-size:9.95px;line-height:13px">Нет</div>
<div class="clip" style="left:900px;top:458.40px;height:29.10px;width:14.2px"><div class="t td" style="left:0.30px;top:7.92px;font-size:9.95px;line-height:13px">Нет</div></div>
<svg class="ic" style="left:920.60px;top:469.95px" width="10" height="7" viewBox="0 0 10 7"><path d="M0.9 1.1 L5 5.1 L9.1 1.1" fill="none" stroke="#333335" stroke-width="1.65"/></svg>
<div class="hl" style="top:516px"></div>
<div class="ic" style="left:318px;top:491.50px"><svg width="20" height="20" viewBox="0 0 20 20"><path d="M6.7 15.3 L7.2 11.9 L13.5 5.6 L16.4 8.5 L10.1 14.8 Z M12 7.1 L14.9 10" fill="none" stroke="#38383a" stroke-width="1.5" stroke-linejoin="miter"/></svg></div>
<div class="ic" style="left:365px;top:491.50px"><svg width="20" height="20" viewBox="0 0 20 20"><circle cx="10.4" cy="12.4" r="2.6" fill="none" stroke="#38383a" stroke-width="1.7"/><path d="M12.3 10.5 L17.4 5.4 M15.3 7.5 L17.3 9.5" fill="none" stroke="#38383a" stroke-width="1.7"/></svg></div>
<svg class="ic" style="left:408px;top:492.50px" width="20" height="18" viewBox="0 0 20 18"><path d="M8.3 12.3 L11.55 5 L14.8 12.3 M9.4 9.5 H13.7" fill="none" stroke="#38383a" stroke-width="1.4"/><rect x="6" y="14.05" width="10.8" height="1.4" fill="#38383a"/></svg>
<div class="t td" style="left:468.30px;top:495.32px;font-size:9.95px;line-height:13px;letter-spacing:-0.12px">Ключ региона</div>
<div class="t td" style="left:573.30px;top:495.32px;font-size:9.95px;line-height:13px;letter-spacing:-0.1px;transform:scaleX(0.89);transform-origin:0 0">TERRID</div>
<div class="t td" style="left:701.50px;top:495.32px;font-size:9.95px;line-height:13px">Нет</div>
<svg class="ic" style="left:722.70px;top:498.95px" width="10" height="7" viewBox="0 0 10 7"><path d="M0.9 1.1 L5 5.1 L9.1 1.1" fill="none" stroke="#333335" stroke-width="1.65"/></svg>
<div class="t td" style="left:759.30px;top:495.32px;font-size:9.95px;line-height:13px">Нет</div>
<svg class="ic" style="left:780.20px;top:498.95px" width="10" height="7" viewBox="0 0 10 7"><path d="M0.9 1.1 L5 5.1 L9.1 1.1" fill="none" stroke="#333335" stroke-width="1.65"/></svg>
<div class="t td" style="left:821.00px;top:495.32px;font-size:9.95px;line-height:13px">Нет</div>
<div class="t td" style="left:860.30px;top:495.32px;font-size:9.95px;line-height:13px">Нет</div>
<div class="clip" style="left:900px;top:487.50px;height:28.90px;width:14.2px"><div class="t td" style="left:0.30px;top:7.82px;font-size:9.95px;line-height:13px">Выключено</div></div>
<svg class="ic" style="left:920.60px;top:498.95px" width="10" height="7" viewBox="0 0 10 7"><path d="M0.9 1.1 L5 5.1 L9.1 1.1" fill="none" stroke="#333335" stroke-width="1.65"/></svg>
<div class="fx" style="top:489.30px;height:26.10px"></div>
<div class="t " style="left:956.50px;top:494.95px;font-size:11px;line-height:14px;color:#3a3a3a;font-style:italic;font-family:"Liberation Serif",serif;letter-spacing:-0.3px">fx</div>
<div class="hl" style="top:545px"></div>
<div class="ic" style="left:318px;top:520.40px"><svg width="20" height="20" viewBox="0 0 20 20"><path d="M6.7 15.3 L7.2 11.9 L13.5 5.6 L16.4 8.5 L10.1 14.8 Z M12 7.1 L14.9 10" fill="none" stroke="#38383a" stroke-width="1.5" stroke-linejoin="miter"/></svg></div>
<div class="ic" style="left:365px;top:520.40px"><svg width="20" height="20" viewBox="0 0 20 20"><circle cx="10.4" cy="12.4" r="2.6" fill="none" stroke="#38383a" stroke-width="1.7"/><path d="M12.3 10.5 L17.4 5.4 M15.3 7.5 L17.3 9.5" fill="none" stroke="#38383a" stroke-width="1.7"/></svg></div>
<svg class="ic" style="left:408px;top:521.40px" width="20" height="18" viewBox="0 0 20 18"><path d="M8.3 12.3 L11.55 5 L14.8 12.3 M9.4 9.5 H13.7" fill="none" stroke="#38383a" stroke-width="1.4"/><rect x="6" y="14.05" width="10.8" height="1.4" fill="#38383a"/></svg>
<div class="t td" style="left:468.30px;top:524.22px;font-size:9.95px;line-height:13px;letter-spacing:-0.12px">Код территор...</div>
<div class="t td" style="left:573.30px;top:524.22px;font-size:9.95px;line-height:13px;letter-spacing:-0.1px;transform:scaleX(0.89);transform-origin:0 0">TERRID</div>
<div class="t td" style="left:701.50px;top:524.22px;font-size:9.95px;line-height:13px">Нет</div>
<svg class="ic" style="left:722.70px;top:527.85px" width="10" height="7" viewBox="0 0 10 7"><path d="M0.9 1.1 L5 5.1 L9.1 1.1" fill="none" stroke="#333335" stroke-width="1.65"/></svg>
<div class="t td" style="left:759.30px;top:524.22px;font-size:9.95px;line-height:13px">Нет</div>
<svg class="ic" style="left:780.20px;top:527.85px" width="10" height="7" viewBox="0 0 10 7"><path d="M0.9 1.1 L5 5.1 L9.1 1.1" fill="none" stroke="#333335" stroke-width="1.65"/></svg>
<div class="t td" style="left:821.00px;top:524.22px;font-size:9.95px;line-height:13px">Нет</div>
<div class="t td" style="left:860.30px;top:524.22px;font-size:9.95px;line-height:13px">Нет</div>
<div class="clip" style="left:900px;top:516.40px;height:28.90px;width:14.2px"><div class="t td" style="left:0.30px;top:7.82px;font-size:9.95px;line-height:13px">Нет</div></div>
<svg class="ic" style="left:920.60px;top:527.85px" width="10" height="7" viewBox="0 0 10 7"><path d="M0.9 1.1 L5 5.1 L9.1 1.1" fill="none" stroke="#333335" stroke-width="1.65"/></svg>
<div class="ic" style="left:318px;top:549.25px"><svg width="20" height="20" viewBox="0 0 20 20"><path d="M6.7 15.3 L7.2 11.9 L13.5 5.6 L16.4 8.5 L10.1 14.8 Z M12 7.1 L14.9 10" fill="none" stroke="#38383a" stroke-width="1.5" stroke-linejoin="miter"/></svg></div>
<div class="ic" style="left:365px;top:549.25px"><svg width="20" height="20" viewBox="0 0 20 20"><circle cx="10.4" cy="12.4" r="2.6" fill="none" stroke="#38383a" stroke-width="1.7"/><path d="M12.3 10.5 L17.4 5.4 M15.3 7.5 L17.3 9.5" fill="none" stroke="#38383a" stroke-width="1.7"/></svg></div>
<svg class="ic" style="left:408px;top:550.25px" width="20" height="18" viewBox="0 0 20 18"><path d="M6.3 6.1 L8.4 4.6 V11.8" fill="none" stroke="#38383a" stroke-width="1.5"/><path d="M11.5 6.7 C11.6 5.3 12.5 4.9 13.6 4.9 C14.8 4.9 15.5 5.6 15.5 6.6 C15.5 7.6 14.9 8.2 11.8 11.1 H16.1" fill="none" stroke="#38383a" stroke-width="1.45"/><rect x="6" y="13.6" width="10.8" height="1.4" fill="#38383a"/></svg>
<div class="t td" style="left:468.30px;top:553.07px;font-size:9.95px;line-height:13px;letter-spacing:-0.12px">Код территор...</div>
<div class="t td" style="left:573.30px;top:553.07px;font-size:9.95px;line-height:13px;letter-spacing:-0.1px;transform:scaleX(0.89);transform-origin:0 0">TOPO_ID</div>
<div class="t td" style="left:701.50px;top:553.07px;font-size:9.95px;line-height:13px">Нет</div>
<svg class="ic" style="left:722.70px;top:556.70px" width="10" height="7" viewBox="0 0 10 7"><path d="M0.9 1.1 L5 5.1 L9.1 1.1" fill="none" stroke="#333335" stroke-width="1.65"/></svg>
<div class="t td" style="left:759.30px;top:553.07px;font-size:9.95px;line-height:13px">Нет</div>
<svg class="ic" style="left:780.20px;top:556.70px" width="10" height="7" viewBox="0 0 10 7"><path d="M0.9 1.1 L5 5.1 L9.1 1.1" fill="none" stroke="#333335" stroke-width="1.65"/></svg>
<div class="t td" style="left:821.00px;top:553.07px;font-size:9.95px;line-height:13px">Нет</div>
<div class="t td" style="left:860.30px;top:553.07px;font-size:9.95px;line-height:13px">Нет</div>
<div class="clip" style="left:900px;top:545.30px;height:28.80px;width:14.2px"><div class="t td" style="left:0.30px;top:7.77px;font-size:9.95px;line-height:13px">Нет</div></div>
<svg class="ic" style="left:920.60px;top:556.70px" width="10" height="7" viewBox="0 0 10 7"><path d="M0.9 1.1 L5 5.1 L9.1 1.1" fill="none" stroke="#333335" stroke-width="1.65"/></svg>
<div class="btn gray" style="left:275px;top:610px;width:78px;height:25px"></div>
<div class="t " style="left:305.30px;top:614.01px;font-size:13px;line-height:17px;color:#3c3c3e">Назад</div>
<svg class="ic" style="left:287px;top:617px" width="10" height="11" viewBox="0 0 10 11"><path d="M7.5 1.3 L3.3 5.5 L7.5 9.7" fill="none" stroke="#38383a" stroke-width="1.6"/></svg>
<div class="btn gray" style="left:359px;top:610px;width:78px;height:25px"></div>
<div class="t " style="left:370.00px;top:614.01px;font-size:13px;line-height:17px;color:#3c3c3e">Далее</div>
<svg class="ic" style="left:414px;top:617px" width="10" height="11" viewBox="0 0 10 11"><path d="M2.5 1.3 L6.7 5.5 L2.5 9.7" fill="none" stroke="#38383a" stroke-width="1.6"/></svg>
<div class="frame"></div>
</body></html>
